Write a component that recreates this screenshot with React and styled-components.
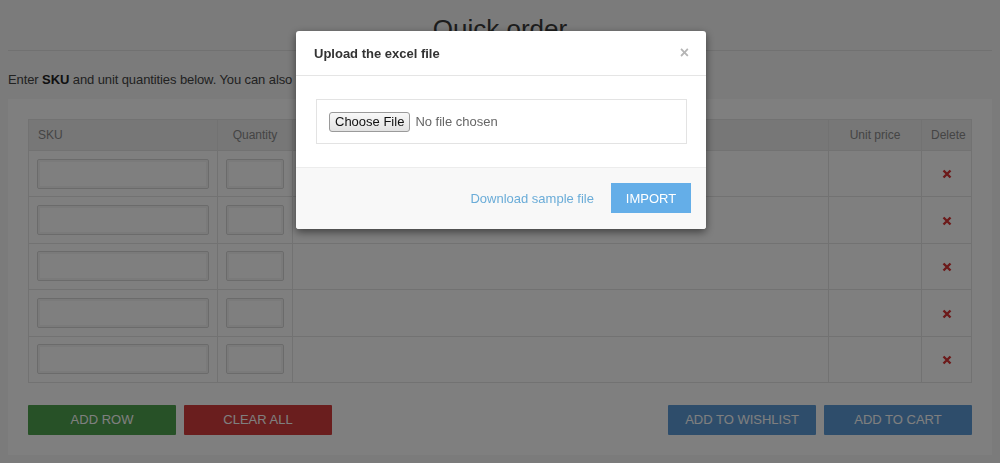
import React from 'react';
import styled, { createGlobalStyle } from 'styled-components';

const Global = createGlobalStyle`
  html, body { margin: 0; padding: 0; }
  body {
    background: #f6f6f6;
    font-family: "Liberation Sans", Arial, Helvetica, sans-serif;
    color: #555;
    overflow: hidden;
  }
`;

const Page = styled.div`
  padding: 0 8px;
  height: 463px;
  box-sizing: border-box;
`;

const Title = styled.h1`
  margin: 0;
  height: 51px;
  box-sizing: border-box;
  padding-top: 14px;
  text-align: center;
  font-weight: 400;
  font-size: 26px;
  line-height: 30px;
  color: #3a3a3a;
  border-bottom: 1px solid #e2e2e2;
`;

const Intro = styled.p`
  margin: 20px 0 10px;
  font-size: 13px;
  line-height: 18px;
  color: #444;
  letter-spacing: -0.1px;
  b { color: #222; }
`;

const Panel = styled.div`
  background: #fff;
  padding: 20px;
`;

const Table = styled.table`
  width: 100%;
  border-collapse: collapse;
  table-layout: fixed;
  border: 1px solid #e4e4e4;
`;

const Th = styled.th`
  background: #eee;
  height: 30px;
  padding: 0 9px;
  font-size: 12px;
  font-weight: 400;
  color: #8a8a8a;
  text-align: ${p => p.$align || 'center'};
  border-right: 1px solid #e4e4e4;
`;

const Td = styled.td`
  height: 45.4px;
  padding: 0 8px;
  border: 1px solid #e4e4e4;
  text-align: ${p => p.$align || 'left'};
  vertical-align: middle;
`;

const Input = styled.input`
  display: block;
  width: 100%;
  height: 30px;
  box-sizing: border-box;
  border: 1px solid #d6d6d6;
  box-shadow: inset 0 0 0 2px #f4f4f4;
  border-radius: 2px;
  background: #fff;
  outline: none;
`;

const DeleteIcon = styled.svg`
  display: inline-block;
  width: 10px;
  height: 10px;
  vertical-align: middle;
`;

const Actions = styled.div`
  display: flex;
  justify-content: space-between;
  margin-top: 22px;
`;

const Group = styled.div`
  display: flex;
  gap: 8px;
`;

const ActionButton = styled.button`
  width: 148px;
  height: 30px;
  border: 0;
  border-radius: 1px;
  background: ${p => p.$bg};
  color: #fff;
  font-family: inherit;
  font-size: 13px;
  text-transform: uppercase;
  cursor: pointer;
`;

const Overlay = styled.div`
  position: fixed;
  inset: 0;
  background: rgba(0, 0, 0, 0.5);
`;

const Modal = styled.div`
  position: fixed;
  top: 31px;
  left: 296px;
  width: 410px;
  background: #fff;
  border-radius: 3px;
  box-shadow: 0 3px 9px rgba(0, 0, 0, 0.5);
  overflow: hidden;
`;

const ModalHeader = styled.div`
  display: flex;
  align-items: center;
  justify-content: space-between;
  height: 45px;
  box-sizing: border-box;
  padding: 0 17px 0 18px;
  border-bottom: 1px solid #e5e5e5;
`;

const ModalTitle = styled.h4`
  margin: 0;
  font-size: 13px;
  font-weight: 700;
  color: #333;
`;

const Close = styled.span`
  font-size: 16px;
  font-weight: 700;
  color: #b5b5b5;
  line-height: 1;
`;

const ModalBody = styled.div`
  padding: 23px 19px 23px 20px;
`;

const FileBox = styled.div`
  display: flex;
  align-items: center;
  gap: 5px;
  height: 45px;
  box-sizing: border-box;
  padding: 0 12px;
  border: 1px solid #e3e3e3;
`;

const ChooseButton = styled.span`
  display: inline-block;
  padding: 1px 5px;
  font-size: 13px;
  line-height: 16px;
  color: #111;
  border: 1px solid #9a9a9a;
  border-radius: 3px;
  background: linear-gradient(#f8f8f8, #e2e2e2);
`;

const FileStatus = styled.span`
  font-size: 13px;
  color: #666;
`;

const ModalFooter = styled.div`
  display: flex;
  align-items: center;
  justify-content: flex-end;
  gap: 17px;
  padding: 15px 15px 16px;
  background: #f8f8f8;
  border-top: 1px solid #ececec;
`;

const Link = styled.a`
  font-size: 13px;
  color: #6aacd8;
  text-decoration: none;
`;

const ImportButton = styled.button`
  width: 80px;
  height: 30px;
  border: 0;
  background: #64aee8;
  color: #fff;
  font-family: inherit;
  font-size: 13px;
`;

const Cross = () => (
  <DeleteIcon viewBox="0 0 10 10">
    <path d="M1.5 1.5 L8.5 8.5 M8.5 1.5 L1.5 8.5" stroke="#d83434" strokeWidth="2.4" strokeLinecap="butt" />
  </DeleteIcon>
);

export default function App() {
  const rows = [0, 1, 2, 3, 4];
  return (
    <>
      <Global />
      <Page>
        <Title>Quick order</Title>
        <Intro>
          Enter <b>SKU</b> and unit quantities below. You can also upload an excel file.
        </Intro>
        <Panel>
          <Table>
            <colgroup>
              <col style={{ width: 189 }} />
              <col style={{ width: 75 }} />
              <col />
              <col style={{ width: 93 }} />
              <col style={{ width: 50 }} />
            </colgroup>
            <thead>
              <tr>
                <Th $align="left">SKU</Th>
                <Th>Quantity</Th>
                <Th />
                <Th>Unit price</Th>
                <Th>Delete</Th>
              </tr>
            </thead>
            <tbody>
              {rows.map(r => (
                <tr key={r}>
                  <Td><Input /></Td>
                  <Td><Input /></Td>
                  <Td />
                  <Td />
                  <Td $align="center"><Cross /></Td>
                </tr>
              ))}
            </tbody>
          </Table>
          <Actions>
            <Group>
              <ActionButton $bg="#4ea24e">Add row</ActionButton>
              <ActionButton $bg="#d43c3c">Clear all</ActionButton>
            </Group>
            <Group>
              <ActionButton $bg="#5d9bd6">Add to wishlist</ActionButton>
              <ActionButton $bg="#5d9bd6">Add to cart</ActionButton>
            </Group>
          </Actions>
        </Panel>
      </Page>
      <Overlay />
      <Modal>
        <ModalHeader>
          <ModalTitle>Upload the excel file</ModalTitle>
          <Close>×</Close>
        </ModalHeader>
        <ModalBody>
          <FileBox>
            <ChooseButton>Choose File</ChooseButton>
            <FileStatus>No file chosen</FileStatus>
          </FileBox>
        </ModalBody>
        <ModalFooter>
          <Link href="#">Download sample file</Link>
          <ImportButton>IMPORT</ImportButton>
        </ModalFooter>
      </Modal>
    </>
  );
}
